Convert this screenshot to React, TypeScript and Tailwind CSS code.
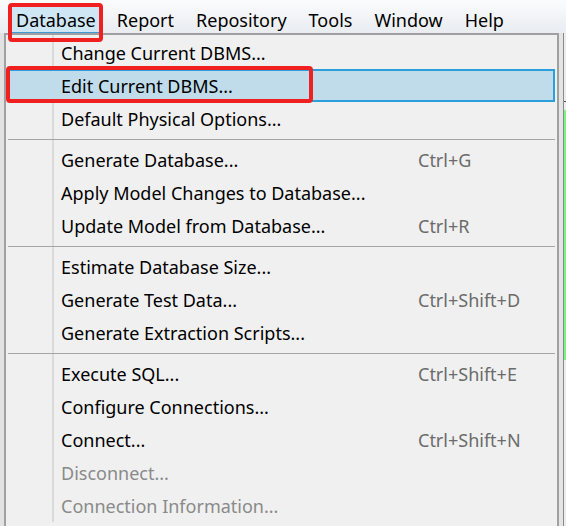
type Item = { label: string; shortcut?: string; disabled?: boolean; active?: boolean }

const groups: Item[][] = [
  [
    { label: 'Change Current DBMS...' },
    { label: 'Edit Current DBMS...', active: true },
    { label: 'Default Physical Options...' },
  ],
  [
    { label: 'Generate Database...', shortcut: 'Ctrl+G' },
    { label: 'Apply Model Changes to Database...' },
    { label: 'Update Model from Database...', shortcut: 'Ctrl+R' },
  ],
  [
    { label: 'Estimate Database Size...' },
    { label: 'Generate Test Data...', shortcut: 'Ctrl+Shift+D' },
    { label: 'Generate Extraction Scripts...' },
  ],
  [
    { label: 'Execute SQL...', shortcut: 'Ctrl+Shift+E' },
    { label: 'Configure Connections...' },
    { label: 'Connect...', shortcut: 'Ctrl+Shift+N' },
    { label: 'Disconnect...', disabled: true },
    { label: 'Connection Information...', disabled: true },
  ],
]

const menus = ['Database', 'Report', 'Repository', 'Tools', 'Window', 'Help']

export default function App() {
  return (
    <div
      className="relative h-[526px] w-[566px] overflow-hidden bg-[#f0f0f0] text-[18px] text-black"
      style={{ fontFamily: '"Noto Sans", "Open Sans", sans-serif' }}
    >
      {/* menu bar */}
      <div className="flex h-[33px] items-stretch bg-gradient-to-b from-[#fbfcfe] to-[#e9ecf0] pl-[10px] pt-[5px]">
        {menus.map((m, i) => (
          <div
            key={m}
            className={
              i === 0
                ? 'mr-[4px] flex items-center border border-[#3d9ad6] bg-[#cfe6f5] px-[5px] pt-[2px] leading-none'
                : 'flex items-center px-[11px] pt-[2px] leading-none'
            }
          >
            {m}
          </div>
        ))}
      </div>

      <div className="flex h-[493px]">
        <div className="w-[4px] bg-[#e2e2e2]" />

        {/* dropdown */}
        <div className="relative w-[555px] border-l-2 border-r-2 border-t-2 border-[#a0a0a0] bg-[#f0f0f0] px-[2px] pt-[1px]">
          <div className="absolute bottom-[4px] left-[46px] top-0 w-[2px] bg-[#dadada]" />
          {groups.map((g, gi) => (
            <div key={gi}>
              {gi > 0 && (
                <div className="flex h-[8px] items-center">
                  <div className="relative h-px w-full bg-[#a5a5a5]" />
                </div>
              )}
              {g.map((it) => (
                <div
                  key={it.label}
                  className={
                    it.active
                      ? 'relative flex h-[33px] items-center border-2 border-[#2b9fdc] bg-[#c0dcea] pt-[2px]'
                      : 'relative flex h-[33px] items-center border-2 border-transparent pt-[2px]'
                  }
                >
                  <span className={'ml-[51px] w-[357px] whitespace-nowrap ' + (it.disabled ? 'text-[#8a8a8a]' : '')}>
                    {it.label}
                  </span>
                  {it.shortcut && <span className="whitespace-nowrap text-[#6b6b6b]">{it.shortcut}</span>}
                </div>
              ))}
            </div>
          ))}
        </div>

        {/* window behind, right side */}
        <div className="flex flex-1">
          <div className="w-[4px] bg-[#e4e4e4]" />
          <div className="w-px bg-[#8a8a8a]" />
          <div className="flex flex-1 flex-col bg-[#ececec]">
            <div className="h-[68px]" />
            <div className="h-px bg-[#555]" />
            <div className="h-[8px]" />
            <div className="h-[250px] bg-[#7ef27e]" />
            <div className="flex-1" />
          </div>
        </div>
      </div>

      {/* annotations */}
      <div className="absolute left-[8px] top-[3px] h-[39px] w-[95px] rounded-[4px] border-4 border-[#f02020]" />
      <div className="absolute left-[6px] top-[66px] h-[37px] w-[307px] rounded-[4px] border-4 border-[#f02020]" />
    </div>
  )
}
